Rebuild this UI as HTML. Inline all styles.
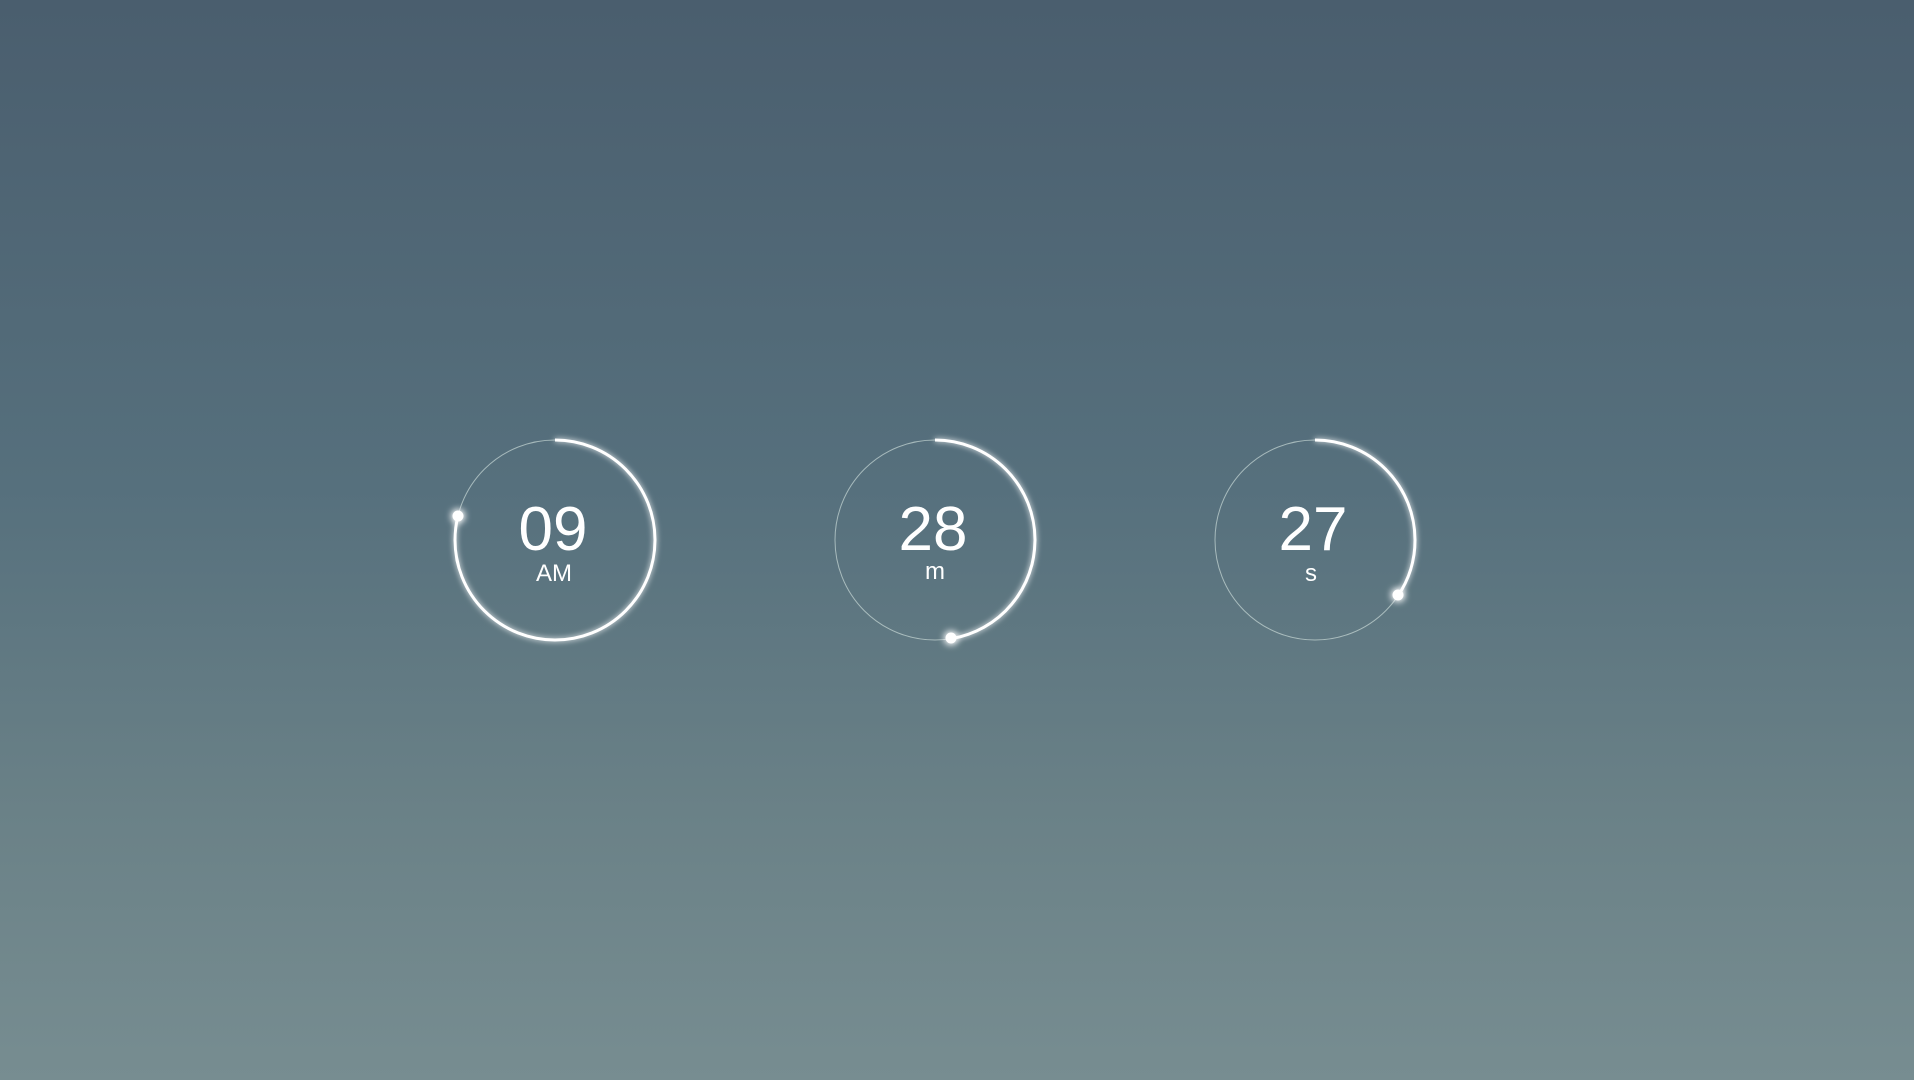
<!DOCTYPE html>
<html><head><style>
html,body{margin:0;padding:0}
body{width:1914px;height:1080px;overflow:hidden;background:linear-gradient(180deg,#4a5e6e 0%,#56707d 45%,#6a8187 75%,#778d91 100%);font-family:"Liberation Sans","DejaVu Sans",sans-serif;}
svg{position:absolute;left:0;top:0}
</style></head><body>
<svg width="1914" height="1080" viewBox="0 0 1914 1080">
<defs>
<filter id="g" x="-50%" y="-50%" width="200%" height="200%">
<feGaussianBlur stdDeviation="3" result="b"/>
<feMerge><feMergeNode in="b"/><feMergeNode in="SourceGraphic"/></feMerge>
</filter>
<filter id="d" x="-200%" y="-200%" width="500%" height="500%">
<feGaussianBlur stdDeviation="4" result="b"/>
<feMerge><feMergeNode in="b"/><feMergeNode in="b"/><feMergeNode in="SourceGraphic"/></feMerge>
</filter>
</defs>
<g fill="none">
<circle cx="555" cy="540" r="100" stroke="rgba(220,235,230,0.6)" stroke-width="1"/>
<circle cx="935" cy="540" r="100" stroke="rgba(220,235,230,0.6)" stroke-width="1"/>
<circle cx="1315" cy="540" r="100" stroke="rgba(220,235,230,0.6)" stroke-width="1"/>
<circle cx="555" cy="540" r="100" stroke="#fff" stroke-width="3" stroke-dasharray="495.6 1000" transform="rotate(-90 555 540)" filter="url(#g)"/>
<circle cx="935" cy="540" r="100" stroke="#fff" stroke-width="3" stroke-dasharray="296.7 1000" transform="rotate(-90 935 540)" filter="url(#g)"/>
<circle cx="1315" cy="540" r="100" stroke="#fff" stroke-width="3" stroke-dasharray="216.4 1000" transform="rotate(-90 1315 540)" filter="url(#g)"/>
</g>
<g fill="#fff" filter="url(#d)">
<circle cx="458" cy="516" r="5.5"/>
<circle cx="951" cy="638" r="5.5"/>
<circle cx="1398" cy="595" r="5.5"/>
</g>
<g fill="#fff" text-anchor="middle">
<text x="553" y="550" font-size="62">09</text>
<text x="554" y="581" font-size="24">AM</text>
<text x="933" y="550" font-size="62">28</text>
<text x="935" y="579" font-size="24">m</text>
<text x="1313" y="550" font-size="62">27</text>
<text x="1311" y="581" font-size="24">s</text>
</g>
</svg>
</body></html>
